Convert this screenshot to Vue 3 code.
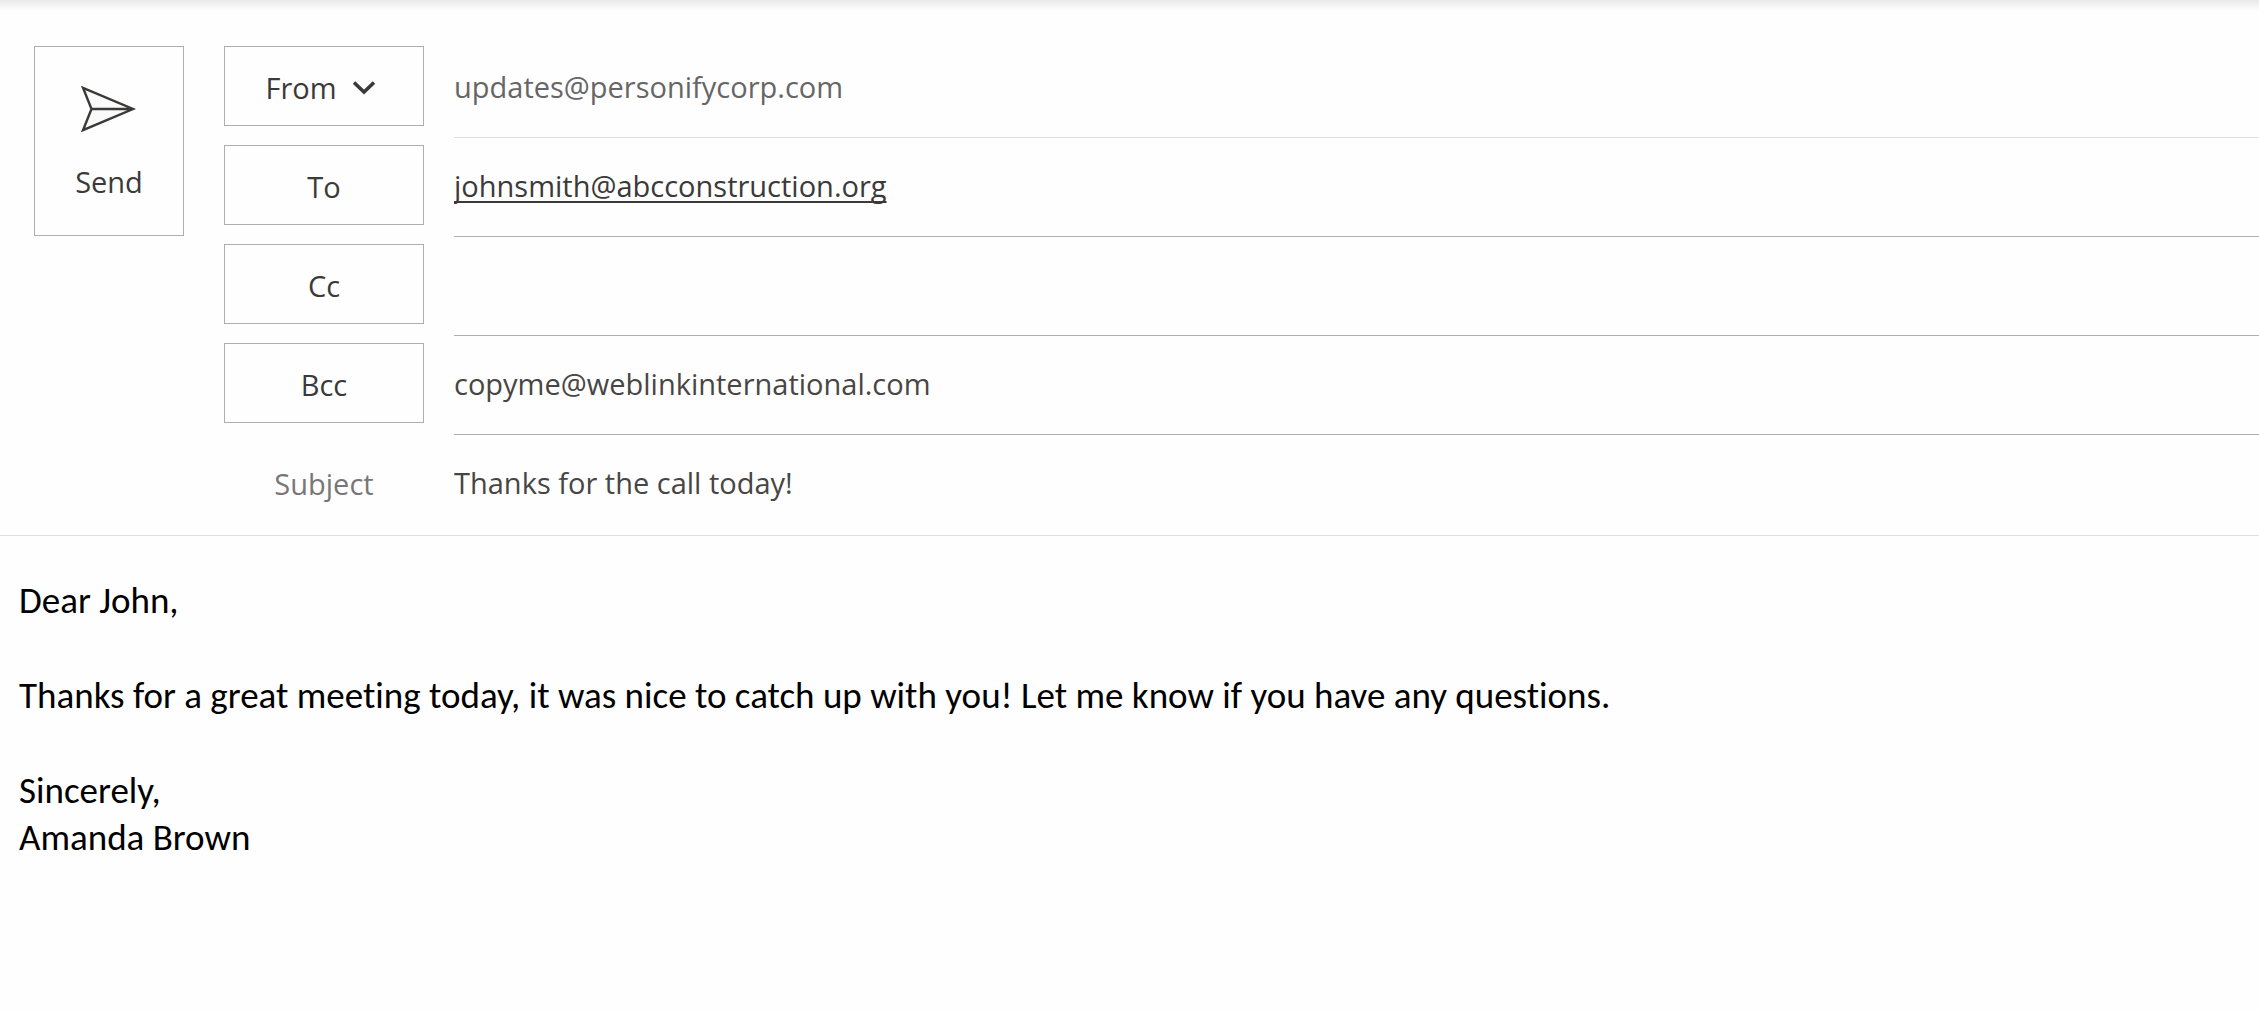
<script setup>
import { ref } from 'vue'

const from = ref('updates@personifycorp.com')
const subject = ref('Thanks for the call today!')
const recipients = ref([
  { id: 'to', label: 'To', value: 'johnsmith@abcconstruction.org', resolved: true },
  { id: 'cc', label: 'Cc', value: '', resolved: false },
  { id: 'bcc', label: 'Bcc', value: 'copyme@weblinkinternational.com', resolved: false },
])
</script>

<template>
  <main class="compose">
    <form class="header" @submit.prevent>
      <button class="send" type="submit">
        <svg class="send-icon" viewBox="0 0 56 46" aria-hidden="true">
          <path d="M2 1.5 L52.5 23 L2 44.5 L10.5 23 Z" fill="#fafafa" stroke="none" />
          <path d="M2 1.8 L52 23 L2 44.2 L10.5 23 Z M10.5 23 H52" fill="none" stroke="#3b3a39" stroke-width="2.4" />
        </svg>
        <span>Send</span>
      </button>

      <div class="rows">
        <div class="row">
          <button class="picker from" type="button">
            <span>From</span>
            <svg class="chevron" viewBox="0 0 22 14" aria-hidden="true">
              <path d="M1 1.5 L11 11 L21 1.5" fill="none" stroke="#3b3a39" stroke-width="3.6" />
            </svg>
          </button>
          <input v-model="from" class="field sender" type="text" aria-label="From" readonly />
        </div>
        <div v-for="r in recipients" :key="r.id" class="row">
          <button class="picker" type="button">{{ r.label }}</button>
          <input
            v-model="r.value"
            class="field"
            :class="{ resolved: r.resolved }"
            type="text"
            :aria-label="r.label"
          />
        </div>
        <div class="row">
          <label class="caption" for="subject">Subject</label>
          <input id="subject" v-model="subject" class="field subject" type="text" />
        </div>
      </div>
    </form>

    <div class="message" contenteditable="true" role="textbox" aria-multiline="true" aria-label="Message">
      <p>Dear John,</p>
      <p>Thanks for a great meeting today, it was nice to catch up with you! Let me know if you have any questions.</p>
      <p>Sincerely,<br />Amanda Brown</p>
    </div>
  </main>
</template>

<style>
body {
  margin: 0;
  background: #fefefe;
}
</style>

<style scoped>
.compose {
  min-height: 100vh;
  box-sizing: border-box;
  background: linear-gradient(#e9e9e9, #fefefe 11px) #fefefe;
  font-family: "Segoe UI", "Open Sans", "Noto Sans", sans-serif;
  font-size: 29px;
  line-height: 40px;
  color: #3b3a39;
}

.header {
  display: flex;
  align-items: flex-start;
  gap: 40px;
  padding: 39px 0 1px 34px;
  border-bottom: 1px solid #e1dfdd;
}

button,
input {
  box-sizing: border-box;
  margin: 0;
  font: inherit;
  color: inherit;
}

button {
  border: 1px solid #b0aeac;
  background: #fefefe;
}

.send {
  display: flex;
  flex: none;
  flex-direction: column;
  align-items: center;
  gap: 30px;
  width: 150px;
  height: 190px;
  margin-top: 7px;
  padding: 39px 0 0;
}

.send-icon {
  width: 56px;
  height: 46px;
}

.rows {
  flex: 1;
  min-width: 0;
}

.row {
  display: flex;
  gap: 30px;
  height: 99px;
}

.picker,
.caption {
  display: flex;
  flex: none;
  box-sizing: border-box;
  align-items: center;
  justify-content: center;
  width: 200px;
  height: 80px;
  margin-top: 7px;
  padding: 3px 0 0;
}

.from {
  gap: 16px;
  padding-right: 8px;
}

.chevron {
  width: 22px;
  height: 14px;
}

.caption {
  color: #777;
}

.field {
  flex: 1;
  min-width: 0;
  height: 99px;
  padding: 0 0 3px;
  border: 0;
  border-bottom: 1px solid #b0aeac;
  outline: 0;
  background: transparent;
  color: #484644;
}

.sender {
  border-color: #e1dfdd;
  color: #666;
}

.resolved {
  color: #3b3a39;
  text-decoration: underline 2px;
  text-decoration-skip-ink: none;
  text-underline-offset: 4px;
}

.subject {
  border-color: transparent;
}

.message {
  padding: 41px 19px;
  outline: 0;
  font-family: Calibri, Carlito, Lato, sans-serif;
  font-size: 37px;
  font-variant-ligatures: none;
  line-height: 47px;
  color: #000;
}

.message p {
  margin: 0 0 48px;
}
</style>
